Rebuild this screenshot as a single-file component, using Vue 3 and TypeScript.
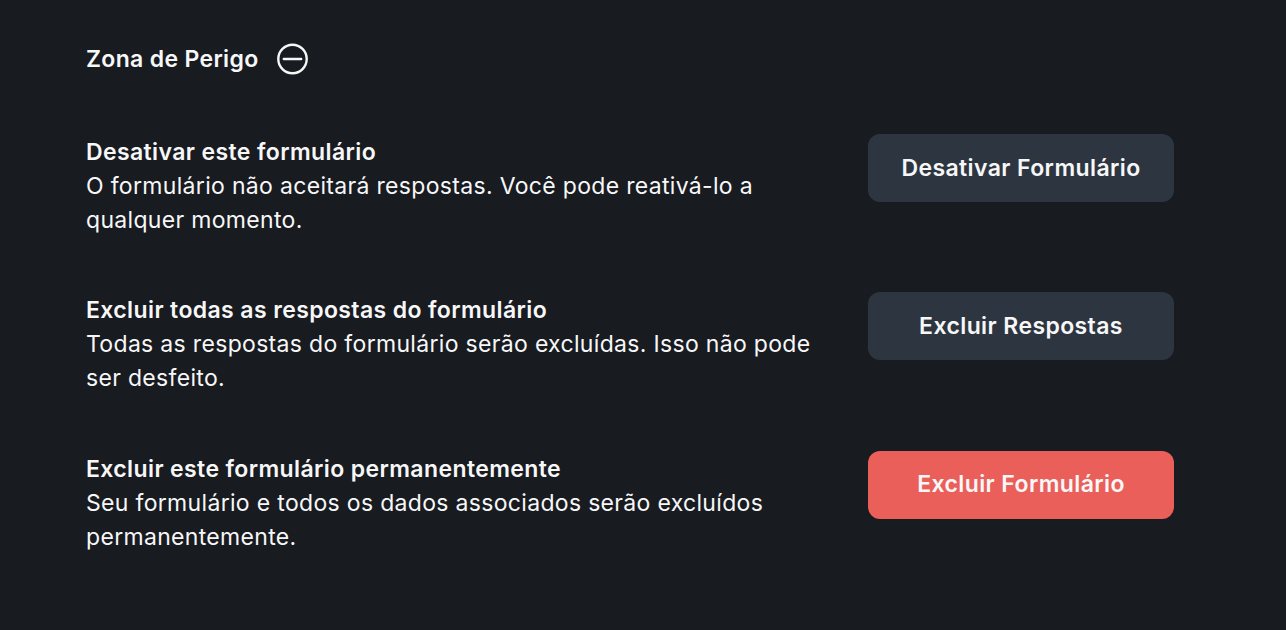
<script setup lang="ts">
interface Row { title: string; desc: string; action: string; danger?: boolean }
const rows: Row[] = [
  { title: 'Desativar este formulário', desc: 'O formulário não aceitará respostas. Você pode reativá-lo a qualquer momento.', action: 'Desativar Formulário' },
  { title: 'Excluir todas as respostas do formulário', desc: 'Todas as respostas do formulário serão excluídas. Isso não pode ser desfeito.', action: 'Excluir Respostas' },
  { title: 'Excluir este formulário permanentemente', desc: 'Seu formulário e todos os dados associados serão excluídos permanentemente.', action: 'Excluir Formulário', danger: true },
]
</script>

<template>
  <main class="page">
    <header class="head">
      <h2 class="heading">Zona de Perigo</h2>
      <svg class="icon" width="32" height="32" viewBox="0 0 32 32" fill="none" stroke="#f7f7f8" stroke-width="2.4" stroke-linecap="round">
        <circle cx="15.5" cy="16" r="14.2" />
        <path d="M6.8 16h17.4" />
      </svg>
    </header>
    <section class="rows">
      <div v-for="r in rows" :key="r.title" class="row">
        <div class="copy">
          <div class="title">{{ r.title }}</div>
          <p class="desc">{{ r.desc }}</p>
        </div>
        <button class="btn" :class="{ danger: r.danger }" type="button">{{ r.action }}</button>
      </div>
    </section>
  </main>
</template>

<style>
html, body { margin: 0; background: #181b20; }
</style>

<style scoped>
.page {
  box-sizing: border-box;
  width: 1286px;
  height: 630px;
  padding: 43px 112px 0 86px;
  background: #181b20;
  color: #f7f7f8;
  font-family: Inter, "Liberation Sans", sans-serif;
}
.head { display: flex; align-items: center; gap: 19px; height: 32px; }
.heading { margin: 0; font-size: 23px; font-weight: 600; line-height: 32px; letter-spacing: 0.33px; }
.rows { display: flex; flex-direction: column; gap: 56.4px; margin-top: 59px; }
.row { display: flex; justify-content: space-between; align-items: flex-start; height: 102px; }
.copy { width: 735px; padding-top: 1px; }
.title { font-size: 23px; font-weight: 600; line-height: 34px; letter-spacing: 0.39px; }
.desc { margin: 0; font-size: 23px; font-weight: 400; line-height: 34px; letter-spacing: 0.32px; }
.btn {
  width: 306px;
  height: 68px;
  border: 0;
  border-radius: 12px;
  background: #2d3640;
  color: #f7f7f8;
  font: 600 23px/1 Inter, "Liberation Sans", sans-serif;
  letter-spacing: 0.4px;
}
.btn.danger { background: #eb5f5a; }
</style>
